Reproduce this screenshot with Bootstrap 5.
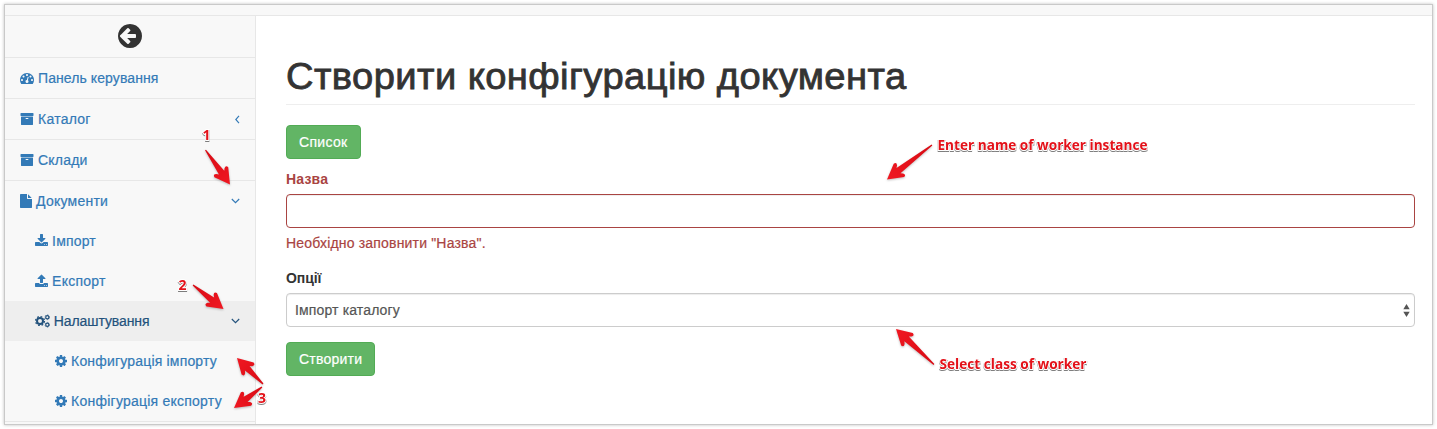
<!DOCTYPE html>
<html lang="uk">
<head>
<meta charset="utf-8">
<meta name="viewport" content="width=device-width, initial-scale=1">
<title>Створити конфігурацію документа</title>
<link href="https://cdn.jsdelivr.net/npm/bootstrap@5.3.0/dist/css/bootstrap.min.css" rel="stylesheet">
<style>
body{font:14px/20px "Liberation Sans",Arial,sans-serif;color:#333;background:#fff;height:429px;overflow:hidden;padding:4px 4px 0 4px}
.app-frame{height:421px;width:1429px;border:1px solid #c9c9c9;box-shadow:0 0 3px rgba(0,0,0,.25);overflow:hidden}
.topbar{height:11px;background:#f8f8f8;border-bottom:1px solid #e7e7e7}
.sidebar{width:251px;background:#f8f8f8;border-right:1px solid #e7e7e7}
.side-row{height:41px;border-bottom:1px solid #e7e7e7}
.side-row.first{height:42px;padding-bottom:2px}
.side-group{border-bottom:1px solid #e7e7e7}
.sidebar a{color:#337ab7;height:40px;padding:0 15px;text-decoration:none;white-space:pre}
.sidebar .lvl2{padding-left:30px}
.sidebar .lvl3{padding-left:50px}
.sidebar a.current{background:#eee;color:#23527c}
.sidebar a span,.btn span,.bad-text span,.form-select{-webkit-text-stroke:.2px currentColor}
.t0{letter-spacing:-.09px}
.t1{letter-spacing:.09px}
.t2{letter-spacing:.18px}
.t3{letter-spacing:.23px}
.t4{letter-spacing:.33px}
.fa{height:14px;width:auto;fill:currentColor;flex:none}
.caret-ico{width:9px;height:9px;fill:none;stroke:currentColor;stroke-width:1.15;margin-left:auto;flex:none}
.caret-ico.shut{margin-right:-2px}
.main-pane{padding:0 17px 0 30px}
h1{font-size:36px;line-height:40px;font-weight:500;margin:41px 0 20px;padding-bottom:7px;border-bottom:1px solid #eee;color:#333;white-space:nowrap;letter-spacing:.4px;-webkit-text-stroke:.8px #333}
h1 span{display:inline-block;transform:scaleX(1.059);transform-origin:0 50%}
.btn-success{--bs-btn-bg:#62b565;--bs-btn-border-color:#52ab55;font-size:14px;line-height:20px;padding:6px 12px;border-radius:4px;height:34px;display:block}
.field-name{margin-top:10px}
.field-opts{margin-bottom:15px}
.field-error{margin:5px 0 15px}
.form-label{font-weight:700;line-height:20px;margin:0 0 5px;display:block}
.form-control,.form-select{height:34px;font-size:14px;line-height:20px;padding:6px 8px;border:1px solid #ccc;border-radius:4px;color:#555;box-shadow:inset 0 1px 1px rgba(0,0,0,.075)}
.form-control.bad{border-color:#a94442}
.bad-text{color:#a94442}
.form-select{letter-spacing:.14px;background-image:url("data:image/svg+xml,%3Csvg xmlns='http://www.w3.org/2000/svg' viewBox='0 0 7 13'%3E%3Cpath fill='%23555' d='M.3 5.200 3.500 0 6.700 5.200zM.3 7.800h6.400L3.500 13z'/%3E%3C/svg%3E");background-size:7px 13px;background-position:right 4px center}
.notes{left:0;top:0;pointer-events:none}
.arrows{filter:drop-shadow(0 1px .8px rgba(0,0,0,.25))}
.labels{filter:drop-shadow(.4px 1px .5px rgba(0,0,0,.5))}
.notes text{font:700 14px "Open Sans","Noto Sans",sans-serif;fill:#e31119;stroke:#fff;stroke-width:2px;paint-order:stroke}
</style>
</head>
<body>
<svg width="0" height="0" class="position-absolute">
<defs>
<symbol id="archive" viewBox="0 0 1792 1792"><path d="M1088 832q0-26-19-45t-45-19h-256q-26 0-45 19t-19 45 19 45 45 19h256q26 0 45-19t19-45zm576-192v960q0 26-19 45t-45 19h-1408q-26 0-45-19t-19-45v-960q0-26 19-45t45-19h1408q26 0 45 19t19 45zm64-448v256q0 26-19 45t-45 19h-1536q-26 0-45-19t-19-45v-256q0-26 19-45t45-19h1536q26 0 45 19t19 45z"/></symbol>
<symbol id="cog" viewBox="128 0 1536 1792"><path d="M1152 896q0-106-75-181t-181-75-181 75-75 181 75 181 181 75 181-75 75-181zm512-109v222q0 12-8 23t-20 13l-185 28q-19 54-39 91 35 50 107 138 10 12 10 25t-9 23q-27 37-99 108t-94 71q-12 0-26-9l-138-108q-44 23-91 38-16 136-29 186-7 28-36 28h-222q-14 0-24.500-8.500t-11.500-21.500l-28-184q-49-16-90-37l-141 107q-10 9-25 9-14 0-25-11-126-114-165-168-7-10-7-23 0-12 8-23 15-21 51-66.500t54-70.500q-27-50-41-99l-183-27q-13-2-21-12.500t-8-23.500v-222q0-12 8-23t19-13l186-28q14-46 39-92-40-57-107-138-10-12-10-24 0-10 9-23 26-36 98.500-107.500t94.500-71.500q13 0 26 10l138 107q44-23 91-38 16-136 29-186 7-28 36-28h222q14 0 24.500 8.500t11.500 21.500l28 184q49 16 90 37l142-107q9-9 24-9 13 0 25 10 129 119 165 170 7 8 7 22 0 12-8 23-15 21-51 66.500t-54 70.500q26 50 41 98l183 28q13 2 21 12.500t8 23.500z"/></symbol>
<linearGradient id="red" x1="0" y1="0" x2="1" y2="0"><stop offset="0" stop-color="#f01822"/><stop offset="1" stop-color="#d80b14"/></linearGradient>
</defs>
</svg>

<div class="app-frame d-flex flex-column">
  <header class="topbar"></header>
  <div class="d-flex flex-grow-1">
    <nav class="sidebar flex-shrink-0">
      <div class="side-row first d-flex justify-content-center align-items-center">
        <svg width="28" height="28" viewBox="0 0 1792 1792" fill="#333"><path d="M1280 960v-128q0-26-19-45t-45-19h-502l189-189q19-19 19-45t-19-45l-91-91q-18-18-45-18t-45 18l-362 362-91 91q-18 18-18 45t18 45l91 91 362 362q18 18 45 18t45-18l91-91q18-18 18-45t-18-45l-189-189h502q26 0 45-19t19-45zm384-64q0 209-103 385.500t-279.500 279.500-385.500 103-385.500-103-279.500-279.500-103-385.500 103-385.500 279.500-279.500 385.500-103 385.500 103 279.500 279.500 103 385.500z"/></svg>
      </div>
      <div class="side-row"><a href="#" class="d-flex align-items-center"><svg class="fa" width="14" viewBox="0 0 1792 1792"><path d="M384 1152q0-53-37.500-90.500t-90.500-37.500-90.500 37.500-37.500 90.500 37.500 90.500 90.500 37.500 90.500-37.500 37.500-90.500zm192-448q0-53-37.500-90.500t-90.500-37.500-90.500 37.500-37.500 90.500 37.500 90.500 90.500 37.500 90.500-37.500 37.500-90.500zm428 481l101-382q6-26-7.500-48.500t-38.500-29.500-48 6.500-30 39.500l-101 382q-60 5-107 43.500t-63 98.500q-20 77 20 146t117 89 146-20 89-117q16-60-6-117t-72-91zm660-33q0-53-37.500-90.500t-90.500-37.500-90.500 37.500-37.500 90.500 37.500 90.500 90.500 37.500 90.500-37.500 37.500-90.500zm-640-640q0-53-37.500-90.500t-90.500-37.500-90.500 37.500-37.500 90.500 37.500 90.500 90.500 37.500 90.500-37.500 37.500-90.500zm448 192q0-53-37.500-90.500t-90.500-37.500-90.500 37.500-37.500 90.500 37.500 90.500 90.500 37.500 90.500-37.500 37.500-90.500zm320 448q0 261-141 483-19 29-54 29h-1402q-35 0-54-29-141-221-141-483 0-182 71-348t191-286 286-191 348-71 348 71 286 191 191 286 71 348z"/></svg><span class="t1"> Панель керування</span></a></div>
      <div class="side-row"><a href="#" class="d-flex align-items-center"><svg class="fa" width="14" viewBox="0 0 1792 1792"><use href="#archive"/></svg><span class="t3"> Каталог</span><svg class="caret-ico shut" viewBox="0 0 9 9"><path d="M6 .8 2.800 4.500 6 8.200"/></svg></a></div>
      <div class="side-row"><a href="#" class="d-flex align-items-center"><svg class="fa" width="14" viewBox="0 0 1792 1792"><use href="#archive"/></svg><span class="t2"> Склади</span></a></div>
      <div class="side-group">
        <a href="#" class="d-flex align-items-center"><svg class="fa" width="12" viewBox="128 0 1536 1792"><path d="M1152 512v-472q22 14 36 28l408 408q14 14 28 36h-472zm-128 32q0 40 28 68t68 28h544v1056q0 40-28 68t-68 28h-1344q-40 0-68-28t-28-68v-1600q0-40 28-68t68-28h800v544z"/></svg><span class="t3"> Документи</span><svg class="caret-ico" viewBox="0 0 9 9"><path d="M.8 2 4.500 5.700 8.200 2"/></svg></a>
        <a href="#" class="lvl2 d-flex align-items-center"><svg class="fa" width="13" viewBox="64 0 1664 1792"><path d="M1344 1344q0-26-19-45t-45-19-45 19-19 45 19 45 45 19 45-19 19-45zm256 0q0-26-19-45t-45-19-45 19-19 45 19 45 45 19 45-19 19-45zm128-224v320q0 40-28 68t-68 28h-1472q-40 0-68-28t-28-68v-320q0-40 28-68t68-28h465l135 136q58 56 136 56t136-56l136-136h464q40 0 68 28t28 68zm-325-569q17 41-14 70l-448 448q-18 19-45 19t-45-19l-448-448q-31-29-14-70 17-39 59-39h256v-448q0-26 19-45t45-19h256q26 0 45 19t19 45v448h256q42 0 59 39z"/></svg><span class="t2"> Імпорт</span></a>
        <a href="#" class="lvl2 d-flex align-items-center"><svg class="fa" width="13" viewBox="64 0 1664 1792"><path d="M1344 1472q0-26-19-45t-45-19-45 19-19 45 19 45 45 19 45-19 19-45zm256 0q0-26-19-45t-45-19-45 19-19 45 19 45 45 19 45-19 19-45zm128-224v320q0 40-28 68t-68 28h-1472q-40 0-68-28t-28-68v-320q0-40 28-68t68-28h427q21 56 70.500 92t110.500 36h256q61 0 110.500-36t70.500-92h427q40 0 68 28t28 68zm-325-648q-17 40-59 40h-256v448q0 26-19 45t-45 19h-256q-26 0-45-19t-19-45v-448h-256q-42 0-59-40-17-39 14-69l448-448q18-19 45-19t45 19l448 448q31 30 14 69z"/></svg><span class="t3"> Експорт</span></a>
        <a href="#" class="lvl2 current d-flex align-items-center"><svg class="fa" width="15" viewBox="0 0 15 14"><g fill="none" stroke="currentColor"><circle cx="5" cy="7" r="3" stroke-width="2"/><circle cx="5" cy="7" r="4.500" stroke-width="1.200" stroke-dasharray="1.770 1.764"/><circle cx="12.300" cy="3.200" r="1.600" stroke-width="1.200"/><circle cx="12.300" cy="3.200" r="2.400" stroke-width=".6" stroke-dasharray="1.260 1.250"/><circle cx="12.300" cy="10.800" r="1.600" stroke-width="1.200"/><circle cx="12.300" cy="10.800" r="2.400" stroke-width=".6" stroke-dasharray="1.260 1.250"/></g></svg><span class="t0"> Налаштування</span><svg class="caret-ico" viewBox="0 0 9 9"><path d="M.8 2 4.500 5.700 8.200 2"/></svg></a>
        <a href="#" class="lvl3 d-flex align-items-center"><svg class="fa" width="12" viewBox="0 0 12 14"><use href="#cog"/></svg><span class="t2"> Конфигурація імпорту</span></a>
        <a href="#" class="lvl3 d-flex align-items-center"><svg class="fa" width="12" viewBox="0 0 12 14"><use href="#cog"/></svg><span class="t3"> Конфігурація експорту</span></a>
      </div>
    </nav>
    <main class="main-pane flex-grow-1">
      <h1><span>Створити конфігурацію документа</span></h1>
      <button class="btn btn-success"><span class="t4">Список</span></button>
      <form>
        <div class="field-name">
          <label class="form-label bad-text t2" for="name">Назва</label>
          <input id="name" class="form-control bad">
          <div class="bad-text field-error"><span class="t2">Необхідно заповнити "Назва".</span></div>
        </div>
        <div class="field-opts">
          <label class="form-label t0" for="opts">Опції</label>
          <select id="opts" class="form-select"><option>Імпорт каталогу</option></select>
        </div>
        <button type="button" class="btn btn-success"><span class="t3">Створити</span></button>
      </form>
    </main>
  </div>
</div>

<svg class="notes position-absolute" width="1437" height="429" viewBox="0 0 1437 429">
  <g class="arrows" fill="url(#red)">
    <path transform="translate(230 184.500) rotate(-125.400)" d="M0 0 15-8.500Q18.500-8 16.500-5L14.500-3.300 42.300-.6V.6L14.500 3.300 16.500 5Q18.500 8 15 8.500z"/>
    <path transform="translate(223.500 309) rotate(-141.800)" d="M0 0 15-8.500Q18.500-8 16.500-5L14.500-3.300 38.800-.6V.6L14.500 3.300 16.500 5Q18.500 8 15 8.500z"/>
    <path transform="translate(237 358) rotate(45)" d="M0 0 15-8.500Q18.500-8 16.500-5L14.500-3.300 36.800-.6V.6L14.500 3.300 16.500 5Q18.500 8 15 8.500z"/>
    <path transform="translate(234 408) rotate(-36.900)" d="M0 0 15-8.500Q18.500-8 16.500-5L14.500-3.300 35-.6V.6L14.500 3.300 16.500 5Q18.500 8 15 8.500z"/>
    <path transform="translate(887 179.500) rotate(-37.500)" d="M0 0 15-8.500Q18.500-8 16.500-5L14.500-3.300 56.700-.6V.6L14.500 3.300 16.500 5Q18.500 8 15 8.500z"/>
    <path transform="translate(896 329) rotate(43.100)" d="M0 0 15-8.500Q18.500-8 16.500-5L14.500-3.300 52-.6V.6L14.500 3.300 16.500 5Q18.500 8 15 8.500z"/>
  </g>
  <g class="labels">
    <text x="202.500" y="140">1</text>
    <text x="178.500" y="289.500">2</text>
    <text x="258" y="403">3</text>
    <text x="937.500" y="150" textLength="210" lengthAdjust="spacingAndGlyphs">Enter name of worker instance</text>
    <text x="939.500" y="369" textLength="147" lengthAdjust="spacingAndGlyphs">Select class of worker</text>
  </g>
</svg>
<script src="https://cdn.jsdelivr.net/npm/bootstrap@5.3.0/dist/js/bootstrap.bundle.min.js"></script>
</body>
</html>
